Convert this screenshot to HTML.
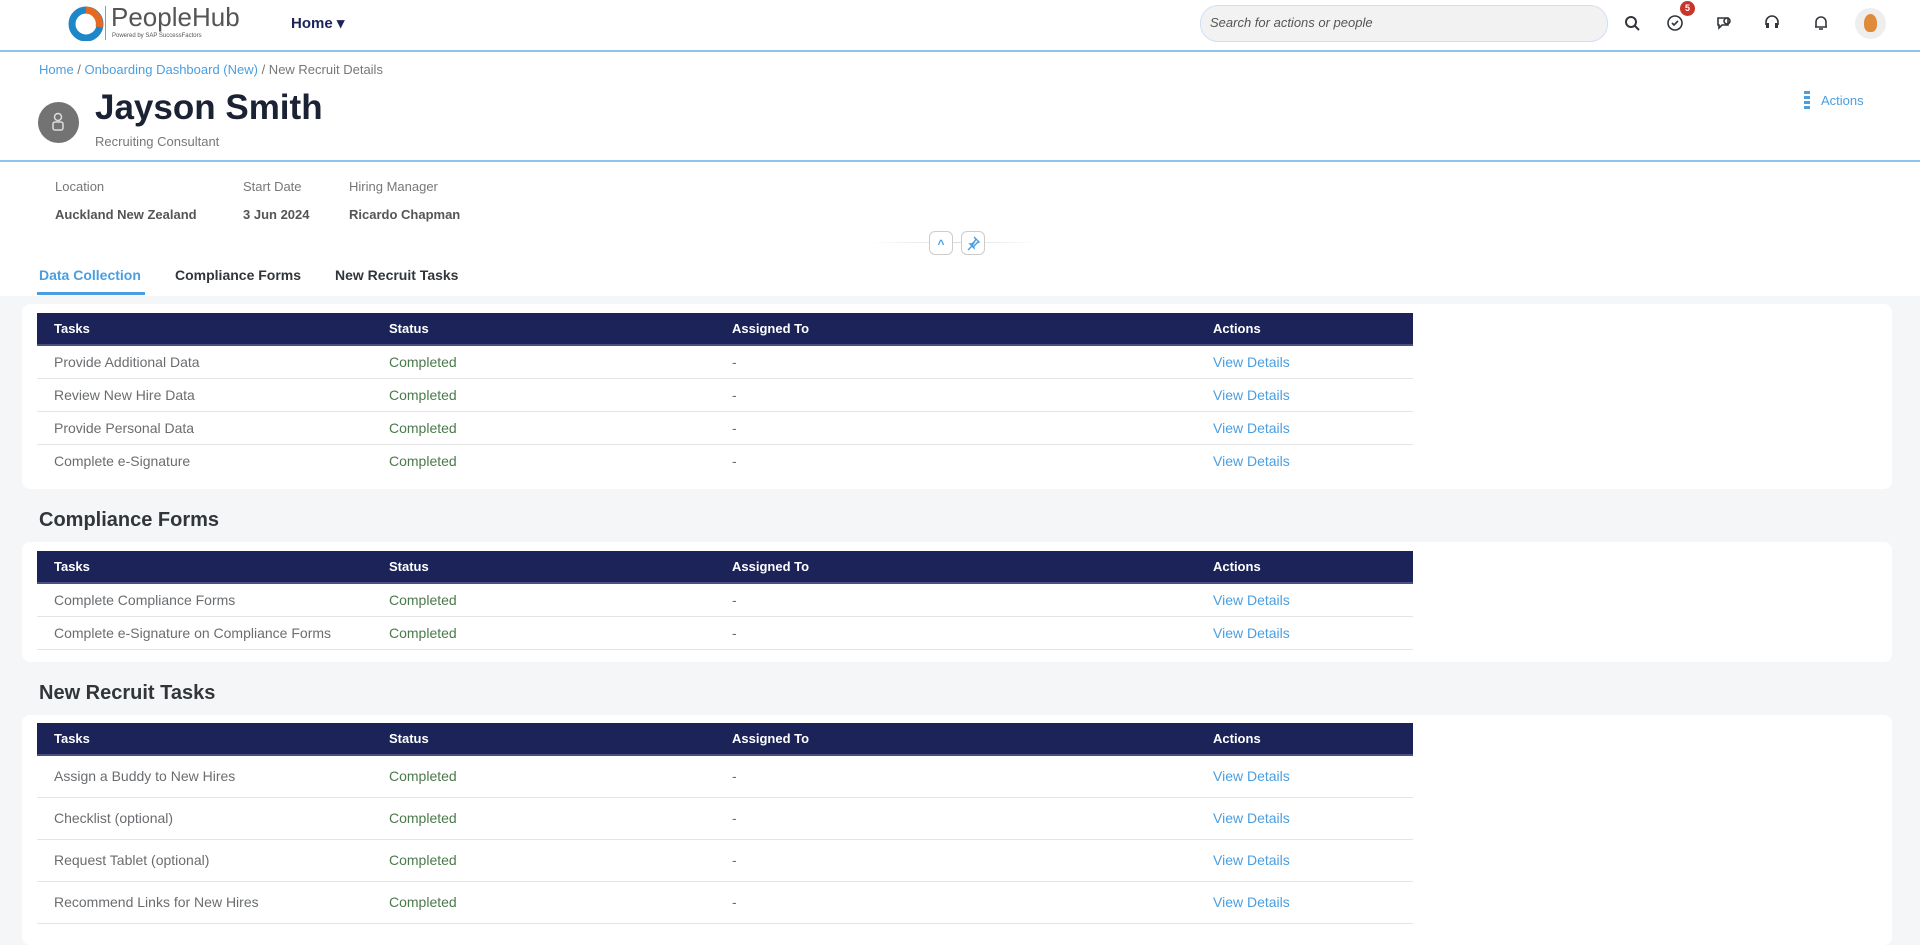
<!DOCTYPE html>
<html><head><meta charset="utf-8"><style>
*{box-sizing:border-box;margin:0;padding:0}
body{width:1920px;height:930px;overflow:hidden;background:#f5f6f7;font-family:"Liberation Sans",sans-serif;position:relative;color:#32363a}
.a{position:absolute}
.hdr{left:0;top:0;width:1920px;height:296px;background:#fff}
.line{left:0;width:1920px;height:2px;background:#8cc4ea}
.card{left:22px;width:1870px;background:#fff;border-radius:8px}
table{position:absolute;left:15px;width:1376px;border-collapse:collapse;font-size:14px}
th{background:#1b2359;color:#fff;text-align:left;font-weight:bold;height:32px;padding:0;border-bottom:2px solid #4a5080;font-size:13px}
td{padding:0;border-bottom:1px solid #e4e4e4;color:#6a6d70}
th:nth-child(1),td:nth-child(1){padding-left:17px;width:352px}
th:nth-child(2),td:nth-child(2){width:343px}
th:nth-child(3),td:nth-child(3){width:481px}
td.s{color:#4a7a4a}
td.l{color:#4a9ee0}
.t1 td{height:33px}
.t3 td{height:42px}
h2{position:absolute;left:39px;font-size:20px;font-weight:bold;color:#32363a}
.ic{width:22px;height:22px;top:12px}
</style></head><body>
<div class="a hdr"></div>
<svg class="a" style="left:68px;top:5px" width="36" height="36" viewBox="0 0 36 36"><circle cx="18" cy="19" r="14" fill="none" stroke="#1f86c8" stroke-width="7"/><path d="M18 5 A14 14 0 0 1 31 22" fill="none" stroke="#e56a1f" stroke-width="7"/><circle cx="18" cy="19" r="6" fill="#fff"/></svg>
<div class="a" style="left:105px;top:6px;width:1px;height:34px;background:#999"></div>
<div class="a" style="left:111px;top:2px;font-size:26px;color:#555">PeopleHub</div>
<div class="a" style="left:112px;top:33px;font-size:6px;color:#555">Powered by SAP SuccessFactors</div>
<div class="a" style="left:291px;top:14px;font-size:15px;font-weight:bold;color:#1b2359">Home ▾</div>
<div class="a" style="left:1200px;top:5px;width:408px;height:37px;border-radius:18px;background:#f2f2f2;border:1px solid #cfe0f5"></div>
<div class="a" style="left:1210px;top:15px;font-size:13px;font-style:italic;color:#555">Search for actions or people</div>
<svg class="a ic" style="left:1621px" viewBox="0 0 22 22"><circle cx="10" cy="10" r="5" fill="none" stroke="#32363a" stroke-width="2"/><path d="M14 14l4 4" stroke="#32363a" stroke-width="2"/></svg>
<svg class="a ic" style="left:1664px" viewBox="0 0 22 22"><circle cx="11" cy="11" r="7" fill="none" stroke="#32363a" stroke-width="1.6"/><path d="M8 11l2 2 4-4" fill="none" stroke="#32363a" stroke-width="1.6"/></svg>
<div class="a" style="left:1680px;top:1px;width:15px;height:15px;border-radius:50%;background:#c8352b;color:#fff;font-size:9px;font-weight:bold;text-align:center;line-height:15px">5</div>
<svg class="a ic" style="left:1713px" viewBox="0 0 22 22"><path d="M5 6h10v7H9l-3 3v-3H5z" fill="none" stroke="#32363a" stroke-width="1.6"/><circle cx="14" cy="9" r="3" fill="none" stroke="#32363a" stroke-width="1.6"/></svg>
<svg class="a ic" style="left:1761px" viewBox="0 0 22 22"><path d="M5 13V10a6 6 0 0 1 12 0v3" fill="none" stroke="#32363a" stroke-width="1.6"/><rect x="5" y="11" width="3" height="5" fill="#32363a"/><rect x="14" y="11" width="3" height="5" fill="#32363a"/></svg>
<svg class="a ic" style="left:1810px" viewBox="0 0 22 22"><path d="M6 15V10a5 5 0 0 1 10 0v5h1H5z" fill="none" stroke="#32363a" stroke-width="1.6"/><path d="M9 17h4" stroke="#32363a" stroke-width="1.6"/></svg>
<div class="a" style="left:1855px;top:8px;width:31px;height:31px;border-radius:50%;background:#eee"></div>
<div class="a" style="left:1864px;top:14px;width:13px;height:18px;border-radius:50% 50% 40% 40%;background:#e08a3c"></div>
<div class="a line" style="top:50px"></div>
<div class="a" style="left:39px;top:62px;font-size:13px;color:#777"><span style="color:#4a9ee0">Home</span> / <span style="color:#4a9ee0">Onboarding Dashboard (New)</span> / New Recruit Details</div>
<div class="a" style="left:38px;top:102px;width:41px;height:41px;border-radius:50%;background:#737373"></div>
<svg class="a" style="left:48px;top:111px" width="20" height="22" viewBox="0 0 20 22"><circle cx="10" cy="6" r="3.5" fill="none" stroke="#ddd" stroke-width="1.5"/><rect x="5" y="11" width="10" height="8" rx="2" fill="none" stroke="#ddd" stroke-width="1.5"/></svg>
<div class="a" style="left:95px;top:88px;font-size:35px;font-weight:bold;color:#1a2233">Jayson Smith</div>
<div class="a" style="left:95px;top:134px;font-size:13px;color:#777">Recruiting Consultant</div>
<div class="a" style="left:1804px;top:91px;width:6px;height:18px;background:repeating-linear-gradient(#4a9ee0 0 3px,transparent 3px 5px)"></div>
<div class="a" style="left:1821px;top:93px;font-size:13px;color:#4a9ee0">Actions</div>
<div class="a line" style="top:160px"></div>
<div class="a" style="left:55px;top:179px;font-size:13px;color:#777">Location</div>
<div class="a" style="left:243px;top:179px;font-size:13px;color:#777">Start Date</div>
<div class="a" style="left:349px;top:179px;font-size:13px;color:#777">Hiring Manager</div>
<div class="a" style="left:55px;top:207px;font-size:13px;font-weight:bold;color:#555">Auckland New Zealand</div>
<div class="a" style="left:243px;top:207px;font-size:13px;font-weight:bold;color:#555">3 Jun 2024</div>
<div class="a" style="left:349px;top:207px;font-size:13px;font-weight:bold;color:#555">Ricardo Chapman</div>
<div class="a" style="left:870px;top:242px;width:170px;height:1px;background:linear-gradient(90deg,transparent,#ddd,transparent)"></div>
<div class="a" style="left:929px;top:231px;width:24px;height:24px;border:1px solid #ccc;border-radius:6px;background:#fff;color:#4a9ee0;font-size:12px;text-align:center;line-height:24px;font-weight:bold">^</div>
<div class="a" style="left:961px;top:231px;width:24px;height:24px;border:1px solid #ccc;border-radius:6px;background:#fff"></div>
<svg class="a" style="left:965px;top:235px" width="16" height="16" viewBox="0 0 16 16"><path d="M9 2l5 5-2 1-3 3 0 2-2-2-4 4M7 11L5 9l2 0 3-3 1-2z" fill="none" stroke="#4a9ee0" stroke-width="1.4"/></svg>
<div class="a" style="left:39px;top:267px;font-size:14px;font-weight:bold;color:#4a9ee0">Data Collection</div>
<div class="a" style="left:37px;top:292px;width:108px;height:3px;background:#4a9ee0"></div>
<div class="a" style="left:175px;top:267px;font-size:14px;font-weight:bold;color:#32363a">Compliance Forms</div>
<div class="a" style="left:335px;top:267px;font-size:14px;font-weight:bold;color:#32363a">New Recruit Tasks</div>

<div class="a card" style="top:304px;height:185px">
<table class="t1" style="top:9px"><tr><th>Tasks</th><th>Status</th><th>Assigned To</th><th>Actions</th></tr>
<tr><td>Provide Additional Data</td><td class="s">Completed</td><td>-</td><td class="l">View Details</td></tr>
<tr><td>Review New Hire Data</td><td class="s">Completed</td><td>-</td><td class="l">View Details</td></tr>
<tr><td>Provide Personal Data</td><td class="s">Completed</td><td>-</td><td class="l">View Details</td></tr>
<tr><td style="border:0">Complete e-Signature</td><td class="s" style="border:0">Completed</td><td style="border:0">-</td><td class="l" style="border:0">View Details</td></tr></table>
</div>
<h2 style="top:509px">Compliance Forms</h2>
<div class="a card" style="top:542px;height:120px">
<table class="t1" style="top:9px"><tr><th>Tasks</th><th>Status</th><th>Assigned To</th><th>Actions</th></tr>
<tr><td>Complete Compliance Forms</td><td class="s">Completed</td><td>-</td><td class="l">View Details</td></tr>
<tr><td>Complete e-Signature on Compliance Forms</td><td class="s">Completed</td><td>-</td><td class="l">View Details</td></tr></table>
</div>
<h2 style="top:682px">New Recruit Tasks</h2>
<div class="a card" style="top:715px;height:230px">
<table class="t3" style="top:8px"><tr><th>Tasks</th><th>Status</th><th>Assigned To</th><th>Actions</th></tr>
<tr><td>Assign a Buddy to New Hires</td><td class="s">Completed</td><td>-</td><td class="l">View Details</td></tr>
<tr><td>Checklist (optional)</td><td class="s">Completed</td><td>-</td><td class="l">View Details</td></tr>
<tr><td>Request Tablet (optional)</td><td class="s">Completed</td><td>-</td><td class="l">View Details</td></tr>
<tr><td>Recommend Links for New Hires</td><td class="s">Completed</td><td>-</td><td class="l">View Details</td></tr></table>
</div>
</body></html>
